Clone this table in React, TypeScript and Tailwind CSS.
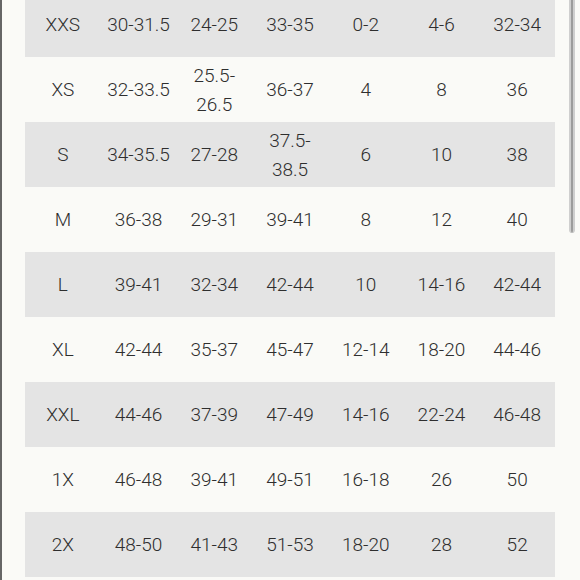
const rows: string[][] = [
  ["XXS", "30-31.5", "24-25", "33-35", "0-2", "4-6", "32-34"],
  ["XS", "32-33.5", "25.5-26.5", "36-37", "4", "8", "36"],
  ["S", "34-35.5", "27-28", "37.5-38.5", "6", "10", "38"],
  ["M", "36-38", "29-31", "39-41", "8", "12", "40"],
  ["L", "39-41", "32-34", "42-44", "10", "14-16", "42-44"],
  ["XL", "42-44", "35-37", "45-47", "12-14", "18-20", "44-46"],
  ["XXL", "44-46", "37-39", "47-49", "14-16", "22-24", "46-48"],
  ["1X", "46-48", "39-41", "49-51", "16-18", "26", "50"],
  ["2X", "48-50", "41-43", "51-53", "18-20", "28", "52"],
];

export default function App() {
  return (
    <div
      className="relative w-[580px] h-[580px] overflow-hidden bg-[#fafaf7] border-l-2 border-[#666666]"
      style={{ fontFamily: "Roboto, 'Noto Sans', sans-serif" }}
    >
      {/* Size table, scrolled slightly */}
      <div className="ml-[23px] w-[530px] -mt-[8px]">
        {rows.map((row, i) => (
          <div
            key={i}
            className={`grid grid-cols-7 h-[65px] ${
              i % 2 === 0 ? "bg-[#e4e4e4]" : "bg-[#fafaf7]"
            }`}
          >
            {row.map((cell, j) => (
              <div
                key={j}
                className="flex items-center justify-center px-[5px] text-center text-[19px] font-light leading-[29px] text-[#2e2e2e]"
              >
                {cell.length > 7 ? (
                  <span>
                    {cell.split("-")[0]}-
                    <br />
                    {cell.split("-")[1]}
                  </span>
                ) : (
                  cell
                )}
              </div>
            ))}
          </div>
        ))}
      </div>

      {/* Scrollbar */}
      <div className="absolute top-0 right-[5px] w-[6px] h-[233px] bg-[#9c9c9c] border-x-2 border-[#cfcfcf] rounded-b-sm" />
    </div>
  );
}
